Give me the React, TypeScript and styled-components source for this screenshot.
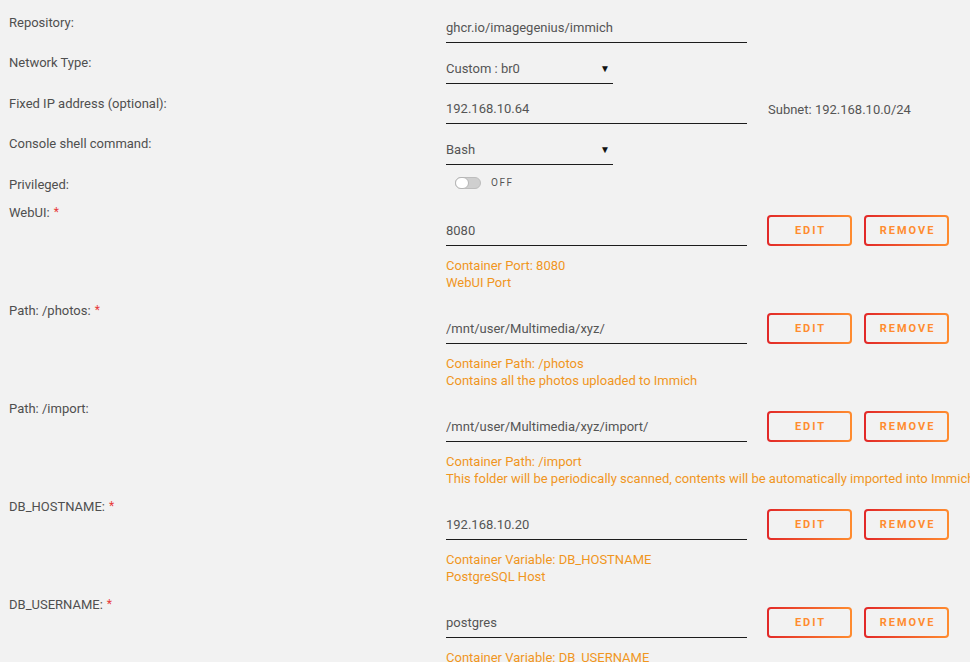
import { Fragment } from 'react';
import styled, { createGlobalStyle } from 'styled-components';

const GlobalStyle = createGlobalStyle`
    html,
    body {
        margin: 0;
        padding: 0;
        background: #f2f2f2;
        overflow: hidden;
    }
    body {
        font-family: Roboto, 'Liberation Sans', sans-serif;
        font-size: 13px;
        color: #4f4f4f;
    }
`;

const Form = styled.div`
    width: 970px;
    height: 662px;
    padding-top: 2.5px;
    box-sizing: border-box;
    overflow: hidden;
`;

const FieldRow = styled.div<{ $h: number }>`
    display: grid;
    grid-template-columns: 437px 1fr;
    padding-left: 9px;
    height: ${(p) => p.$h}px;
`;

const Label = styled.div<{ $top: number }>`
    padding-top: ${(p) => p.$top}px;
    line-height: 17px;
    color: #4f4f4f;
    white-space: nowrap;
`;

const Required = styled.span`
    color: #e83a3a;
    margin-left: 4px;
    font-size: 12px;
    vertical-align: top;
`;

const Field = styled.div<{ $top: number }>`
    padding-top: ${(p) => p.$top}px;
    min-width: 0;
`;

const Line = styled.div`
    display: flex;
    align-items: center;
    gap: 21px;
`;

const PortLine = styled.div`
    display: flex;
    align-items: flex-end;
`;

const TextInput = styled.input<{ $w?: number }>`
    box-sizing: border-box;
    width: ${(p) => p.$w ?? 301}px;
    height: 29px;
    padding: 0 0 1px 0;
    margin: 0;
    border: 0;
    border-bottom: 1px solid #1c1c1c;
    background: transparent;
    font-family: Roboto, 'Liberation Sans', sans-serif;
    font-size: 13px;
    color: #555;
    outline: none;
`;

const SelectBox = styled.div`
    box-sizing: border-box;
    width: 167px;
    height: 29px;
    padding: 0 3px 1px 0;
    border-bottom: 1px solid #1c1c1c;
    display: flex;
    align-items: center;
    justify-content: space-between;
    color: #555;
`;

const Caret = styled.span`
    font-size: 10px;
    color: #111;
`;

const Note = styled.span`
    color: #555;
`;

const Toggle = styled.div`
    display: flex;
    align-items: center;
    margin-left: 9px;
    gap: 10px;
`;

const Track = styled.div`
    position: relative;
    width: 26px;
    height: 12px;
    border-radius: 6px;
    background: #cfcfcf;
    border: 1px solid #bdbdbd;
    box-sizing: border-box;
`;

const Knob = styled.div`
    position: absolute;
    left: -1px;
    top: -1px;
    width: 14px;
    height: 12px;
    border-radius: 6px;
    background: #fff;
    border: 1px solid #b5b5b5;
    box-sizing: border-box;
`;

const ToggleText = styled.span`
    font-size: 10px;
    letter-spacing: 1.5px;
    color: #555;
    line-height: 12px;
`;

const Button = styled.button`
    box-sizing: border-box;
    width: 85px;
    height: 31px;
    margin: 0 0 0 12px;
    padding: 0 0 0 2px;
    border: 2px solid transparent;
    border-radius: 4px;
    background: linear-gradient(#f2f2f2, #f2f2f2) padding-box,
        linear-gradient(90deg, #e22828, #ff8c2f) border-box;
    font-family: Roboto, 'Liberation Sans', sans-serif;
    font-size: 11px;
    font-weight: 700;
    letter-spacing: 2px;
    color: #ff8c2f;
    cursor: pointer;
    &:first-of-type {
        margin-left: 20px;
    }
`;

const Description = styled.div`
    margin-top: 10.5px;
    line-height: 17px;
    color: #f0961e;
    white-space: nowrap;
`;

type PortField = {
    label: string;
    required: boolean;
    value: string;
    info: string[];
};

const portFields: PortField[] = [
    { label: 'WebUI:', required: true, value: '8080', info: ['Container Port: 8080', 'WebUI Port'] },
    {
        label: 'Path: /photos:',
        required: true,
        value: '/mnt/user/Multimedia/xyz/',
        info: ['Container Path: /photos', 'Contains all the photos uploaded to Immich'],
    },
    {
        label: 'Path: /import:',
        required: false,
        value: '/mnt/user/Multimedia/xyz/import/',
        info: [
            'Container Path: /import',
            'This folder will be periodically scanned, contents will be automatically imported into Immich',
        ],
    },
    {
        label: 'DB_HOSTNAME:',
        required: true,
        value: '192.168.10.20',
        info: ['Container Variable: DB_HOSTNAME', 'PostgreSQL Host'],
    },
    {
        label: 'DB_USERNAME:',
        required: true,
        value: 'postgres',
        info: ['Container Variable: DB_USERNAME', 'PostgreSQL Username'],
    },
];

const App = () => {
    return (
        <Fragment>
            <GlobalStyle />
            <Form>
                <FieldRow $h={40.5}>
                    <Label $top={11}>Repository:</Label>
                    <Field $top={11.5}>
                        <TextInput readOnly value="ghcr.io/imagegenius/immich" />
                    </Field>
                </FieldRow>

                <FieldRow $h={40.5}>
                    <Label $top={11}>Network Type:</Label>
                    <Field $top={11.5}>
                        <SelectBox>
                            <span>Custom : br0</span>
                            <Caret>▼</Caret>
                        </SelectBox>
                    </Field>
                </FieldRow>

                <FieldRow $h={40.5}>
                    <Label $top={11}>Fixed IP address (optional):</Label>
                    <Field $top={11.5}>
                        <Line>
                            <TextInput readOnly value="192.168.10.64" />
                            <Note>Subnet: 192.168.10.0/24</Note>
                        </Line>
                    </Field>
                </FieldRow>

                <FieldRow $h={40.5}>
                    <Label $top={11}>Console shell command:</Label>
                    <Field $top={11.5}>
                        <SelectBox>
                            <span>Bash</span>
                            <Caret>▼</Caret>
                        </SelectBox>
                    </Field>
                </FieldRow>

                <FieldRow $h={31.5}>
                    <Label $top={11}>Privileged:</Label>
                    <Field $top={12.5}>
                        <Toggle>
                            <Track>
                                <Knob />
                            </Track>
                            <ToggleText>OFF</ToggleText>
                        </Toggle>
                    </Field>
                </FieldRow>

                {portFields.map((f) => (
                    <FieldRow $h={98} key={f.label}>
                        <Label $top={8}>
                            {f.label}
                            {f.required && <Required>*</Required>}
                        </Label>
                        <Field $top={19}>
                            <PortLine>
                                <TextInput readOnly value={f.value} />
                                <Button>EDIT</Button>
                                <Button>REMOVE</Button>
                            </PortLine>
                            <Description>
                                {f.info.map((line) => (
                                    <div key={line}>{line}</div>
                                ))}
                            </Description>
                        </Field>
                    </FieldRow>
                ))}
            </Form>
        </Fragment>
    );
};

export default App;
